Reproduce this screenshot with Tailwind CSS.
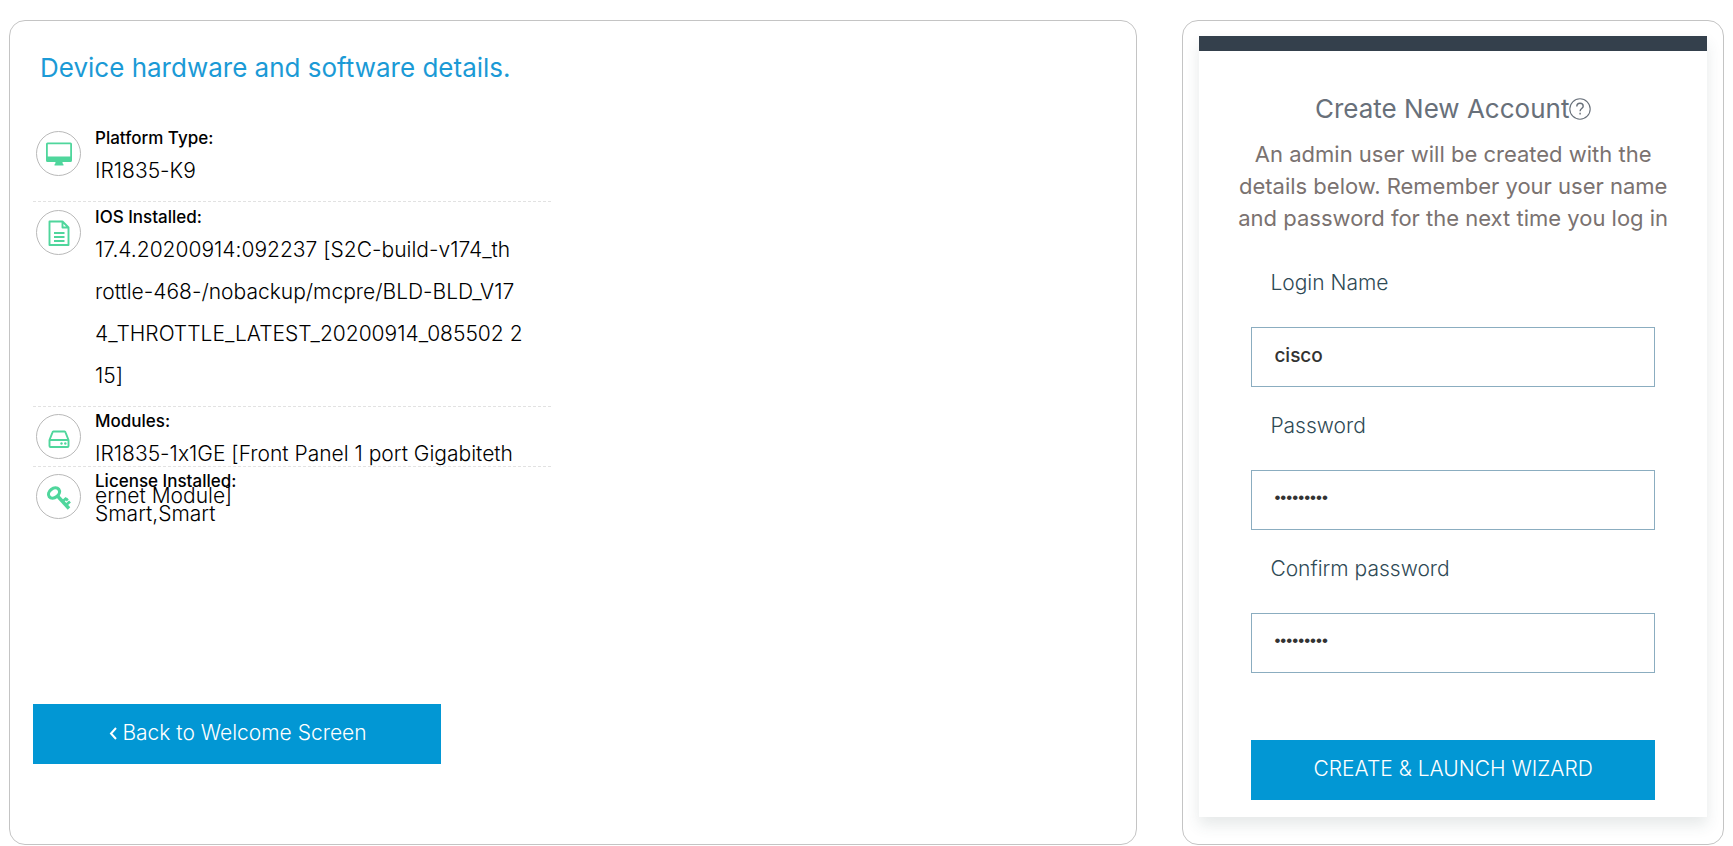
<!DOCTYPE html>
<html lang="en">
<head>
<meta charset="utf-8">
<meta name="viewport" content="width=device-width, initial-scale=1">
<title>Device setup</title>
<script src="https://cdn.jsdelivr.net/npm/@tailwindcss/browser@4"></script>
</head>
<body class="bg-white font-['Inter','Liberation_Sans',sans-serif] font-light text-black">
<main class="grid grid-cols-[25fr_12fr] items-stretch gap-[45px] px-[9px] pt-5">
  <section class="flex flex-col items-start rounded-2xl border border-[#c4c4c4] px-[23px] pt-6 pb-20">
    <h1 class="pl-[7px] text-[26px] leading-[46px] font-normal text-[#1b9ad6]">Device hardware and software details.</h1>
    <dl class="mt-8 w-full max-w-[518px] text-[21px] leading-[42px] [font-feature-settings:'calt'_0]">
      <div class="flex gap-[14px] border-b border-dashed border-[#e2e2e2] pb-[9px] pl-[3px]">
        <span class="mt-2 flex size-[45px] shrink-0 items-center justify-center rounded-full border border-[#b9b9b9] text-[#4fd69c]">
          <svg class="size-7" viewBox="0 0 28 28" fill="currentColor" aria-hidden="true"><path fill-rule="evenodd" d="M2.500 2.500h23a1.500 1.500 0 0 1 1.500 1.500v16.500a1.500 1.500 0 0 1-1.500 1.500H17.500c0 1.500 .5 2 1 2.500v1h-9v-1c.5-.5 1-1 1-2.500H2.500a1.500 1.500 0 0 1-1.500-1.500v-16.500A1.500 1.500 0 0 1 2.500 2.500zM2.800 4.300v12.200h22.400V4.300z"/></svg>
        </span>
        <div>
          <dt class="pt-[3px] text-[17px] leading-6 font-medium">Platform Type:</dt>
          <dd>IR1835-K9</dd>
        </div>
      </div>
      <div class="flex gap-[14px] border-b border-dashed border-[#e2e2e2] pb-[9px] pl-[3px]">
        <span class="mt-2 flex size-[45px] shrink-0 items-center justify-center rounded-full border border-[#b9b9b9] text-[#4fd69c]">
          <svg class="size-7" viewBox="0 0 28 28" fill="none" stroke="currentColor" stroke-width="1.900" stroke-linejoin="round" aria-hidden="true"><path d="M4.500 2.500h13l6 6v17.500h-19zM17.500 2.500v6h6M9 14h10.500M9 18h10.500M9 22h10.500"/></svg>
        </span>
        <div>
          <dt class="pt-[3px] text-[17px] leading-6 font-medium">IOS Installed:</dt>
          <dd class="whitespace-nowrap">17.4.20200914:092237 [S2C-build-v174_th<br>rottle-468-/nobackup/mcpre/BLD-BLD_V17<br>4_THROTTLE_LATEST_20200914_085502 2<br>15]</dd>
        </div>
      </div>
      <div class="flex h-[60px] gap-[14px] border-b border-dashed border-[#e2e2e2] pl-[3px]">
        <span class="mt-[7px] flex size-[45px] shrink-0 items-center justify-center rounded-full border border-[#b9b9b9] text-[#4fd69c]">
          <svg class="size-7" viewBox="0 0 28 28" fill="none" stroke="currentColor" stroke-width="1.900" stroke-linejoin="round" aria-hidden="true"><path d="M4.500 17l3-7.700a1.200 1.200 0 0 1 1-.8h11a1.200 1.200 0 0 1 1 .8l3 7.700v6a1 1 0 0 1-1 1h-17a1 1 0 0 1-1-1zM4.500 17h19"/><circle cx="16.500" cy="20.500" r="1.200" fill="currentColor" stroke="none"/><circle cx="20.300" cy="20.500" r="1.200" fill="currentColor" stroke="none"/></svg>
        </span>
        <div>
          <dt class="pt-[2px] text-[17px] leading-6 font-medium">Modules:</dt>
          <dd class="whitespace-nowrap">IR1835-1x1GE [Front Panel 1 port Gigabiteth<br>ernet Module]</dd>
        </div>
      </div>
      <div class="flex gap-[14px] pb-[9px] pl-[3px]">
        <span class="mt-[7px] flex size-[45px] shrink-0 items-center justify-center rounded-full border border-[#b9b9b9] text-[#4fd69c]">
          <svg class="size-7" viewBox="0 0 28 28" fill="none" stroke="currentColor" aria-hidden="true"><ellipse cx="9" cy="10" rx="6" ry="4.500" stroke-width="3.200" transform="rotate(-38 9 10)"/><path stroke-width="3.400" d="M12.500 13L24 25.500"/><path stroke-width="2.800" d="M17.500 18.500l4-3.500M21 22l4-3.500M20.800 15.500l2 2"/></svg>
        </span>
        <div>
          <dt class="pt-[2px] text-[17px] leading-6 font-medium">License Installed:</dt>
          <dd>Smart,Smart</dd>
        </div>
      </div>
    </dl>
    <button type="button" class="mt-auto flex h-15 w-full max-w-[408px] items-center justify-center gap-[3px] bg-[#0297d4] pb-[2px] text-[21px] font-light text-white">
      <svg class="h-4 w-3" viewBox="0 0 12 16" fill="none" stroke="currentColor" stroke-width="2" aria-hidden="true"><path d="M9 3L4 8.500L9 14"/></svg>
      Back to Welcome Screen
    </button>
  </section>

  <section class="rounded-2xl border border-[#c4c4c4] px-4 pt-[15px] pb-[27px]">
    <form class="border-t-[15px] border-[#34404c] px-[34px] pt-[38px] pb-[17px] shadow-[0_8px_14px_rgba(52,76,76,0.12)]">
      <h2 class="flex items-center justify-center text-[26px] leading-10 font-normal text-[#68707a]">Create New Account<svg class="size-[22px]" viewBox="0 0 22 22" fill="none" stroke="currentColor" stroke-width="1.100" role="img" aria-label="Help"><circle cx="11" cy="11" r="10.200"/><path stroke-width="1.400" d="M7.800 8.500c0-2 1.400-3.200 3.200-3.200s3.200 1.200 3.200 2.900c0 2.300-3.100 2.500-3.100 5M11.100 14.800v1.700"/></svg></h2>
      <p class="mt-[9px] text-center text-[22px] leading-8 font-normal text-[#7a7270]">An admin user will be created with the<br>details below. Remember your user name<br>and password for the next time you log in</p>
      <div class="mt-[27px] px-[18px]">
        <label for="login" class="block pl-[19px] text-[21px] leading-11 text-[#2f4a55]">Login Name</label>
        <input id="login" type="text" value="cisco" class="mt-[22px] block h-15 w-full border border-[#8badc0] px-[22px] pb-1 text-[19px] font-medium text-[#333]">
        <label for="password" class="mt-[17px] block pl-[19px] text-[21px] leading-11 text-[#2f4a55]">Password</label>
        <input id="password" type="password" value="cisco1234" class="mt-[22px] block h-15 w-full border border-[#8badc0] px-[22px] pb-1 font-['Liberation_Sans',sans-serif] text-[17px] text-[#333]">
        <label for="confirm" class="mt-[17px] block pl-[19px] text-[21px] leading-11 text-[#2f4a55]">Confirm password</label>
        <input id="confirm" type="password" value="cisco1234" class="mt-[22px] block h-15 w-full border border-[#8badc0] px-[22px] pb-1 font-['Liberation_Sans',sans-serif] text-[17px] text-[#333]">
        <button type="submit" class="mt-[67px] block h-15 w-full bg-[#0297d4] pb-[2px] text-[21px] font-light text-white">CREATE &amp; LAUNCH WIZARD</button>
      </div>
    </form>
  </section>
</main>
</body>
</html>
